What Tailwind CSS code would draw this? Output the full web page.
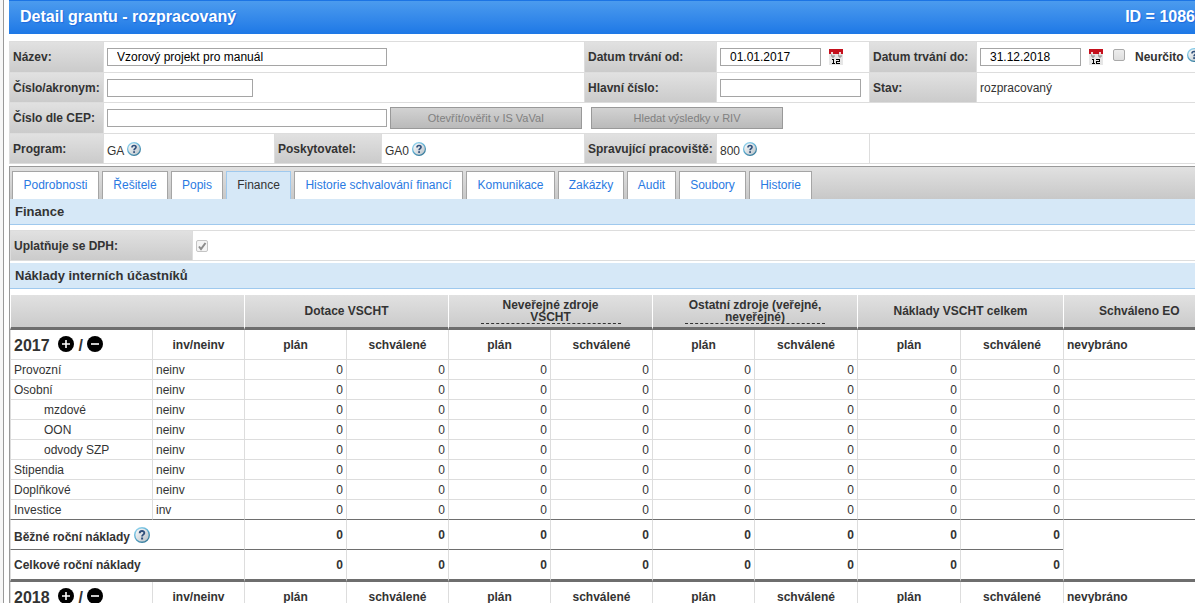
<!DOCTYPE html>
<html lang="cs">
<head>
<meta charset="utf-8">
<title>Detail grantu</title>
<script src="https://cdn.jsdelivr.net/npm/@tailwindcss/browser@4"></script>
</head>
<body class="overflow-hidden bg-[#f7f7f7] font-['Liberation_Sans',Arial,sans-serif] text-xs text-[#333]">
<svg class="absolute size-0" aria-hidden="true">
  <defs>
    <linearGradient id="ring" x1="0" y1="0" x2="0.6" y2="1"><stop offset="0" stop-color="#9fdcf3"/><stop offset="0.5" stop-color="#5fb0d4"/><stop offset="1" stop-color="#3a7f9f"/></linearGradient>
    <linearGradient id="face" x1="0" y1="0" x2="1" y2="1"><stop offset="0" stop-color="#ffffff"/><stop offset="1" stop-color="#b5bfc6"/></linearGradient>
  </defs>
  <symbol id="help" viewBox="0 0 16 16">
    <circle cx="8" cy="8" r="7.3" fill="url(#face)" stroke="url(#ring)" stroke-width="1.4"/>
    <path d="M5.7 6.3C5.8 3.3 10.4 3.4 10.3 6C10.3 7.6 8.1 7.7 8.1 9.5" fill="none" stroke="#2f4f7c" stroke-width="1.9"/>
    <rect x="7.1" y="10.5" width="2" height="2" fill="#2f4f7c"/>
  </symbol>
  <symbol id="calendar" viewBox="0 0 14 16">
    <rect width="14" height="16" fill="#e6e6e6"/>
    <rect width="14" height="5" fill="#c4101c"/>
    <path d="M2 3h2v2h-2zM10 3h2v2h-2z" fill="#f4d5d5"/>
    <path d="M2 6h1v2h2v-2M9 6h1v2h2v-2" fill="none" stroke="#888" stroke-width="1"/>
    <path d="M3 10h2v4h1v1H3v-1h1v-3H3zM7 10h4v3H8v1h3v1H7v-3h3v-1H7z" fill="#000"/>
  </symbol>
  <symbol id="plus" viewBox="0 0 16 16"><circle cx="8" cy="8" r="8" fill="#000"/><path d="M4 8h8M8 4v8" stroke="#fff" stroke-width="1.600"/></symbol>
  <symbol id="minus" viewBox="0 0 16 16"><circle cx="8" cy="8" r="8" fill="#000"/><path d="M4 8h8" stroke="#fff" stroke-width="1.600"/></symbol>
</svg>

<div class="ml-[3px] border-l border-[#999] bg-white pl-[5px]">
  <header class="flex h-[34px] items-center justify-between border-t border-[#1c74e4] bg-linear-to-b from-[#4b9bee] to-[#1d78e6] pb-[2px] pl-[11px] text-base font-bold text-white [text-shadow:1px_1px_1px_#1a6ae0]">
    <h1>Detail grantu - rozpracovaný</h1>
    <span>ID = 1086</span>
  </header>

  <form class="mt-[7px] border-t border-l border-[#ddd] [&_label]:font-bold">
    <div class="flex h-[31px] border-b border-[#ddd]">
      <div class="flex w-[94px] shrink-0 items-center border-r border-[#ddd] bg-linear-to-b from-[#e1e1e1] to-[#cbcbcb] pl-[3px]"><label for="nazev">Název:</label></div>
      <div class="flex w-[481px] shrink-0 items-center border-r border-[#ddd] pl-[3px]"><input id="nazev" value="Vzorový projekt pro manuál" class="h-[18px] w-[280px] border border-[#a5a5a5] pl-[9px] text-black"></div>
      <div class="flex w-[132px] shrink-0 items-center border-r border-[#ddd] bg-linear-to-b from-[#e1e1e1] to-[#cbcbcb] pl-[3px]"><label for="od">Datum trvání od:</label></div>
      <div class="flex w-[153px] shrink-0 items-center border-r border-[#ddd] pl-[3px]"><input id="od" value="01.01.2017" class="h-[18px] w-[101px] border border-[#a5a5a5] pl-[9px] text-black"><button type="button" aria-label="Kalendář" class="ml-2"><svg class="h-4 w-[14px]"><use href="#calendar"/></svg></button></div>
      <div class="flex w-[107px] shrink-0 items-center border-r border-[#ddd] bg-linear-to-b from-[#e1e1e1] to-[#cbcbcb] pl-[3px]"><label for="do">Datum trvání do:</label></div>
      <div class="flex flex-1 items-center pl-[3px] whitespace-nowrap"><input id="do" value="31.12.2018" class="h-[18px] w-[101px] shrink-0 border border-[#a5a5a5] pl-[9px] text-black"><button type="button" aria-label="Kalendář" class="ml-2 shrink-0"><svg class="h-4 w-[14px]"><use href="#calendar"/></svg></button><input type="checkbox" id="neurcito" class="mb-1 ml-[10px] size-3 shrink-0 appearance-none rounded-xs border border-[#a9a9a9] bg-linear-to-b from-[#ededed] to-[#dedede]"><label for="neurcito" class="ml-[10px]">Neurčito</label><svg class="mb-1 ml-[3px] size-[14px] shrink-0"><use href="#help"/></svg></div>
    </div>
    <div class="flex h-[30px] border-b border-[#ddd]">
      <div class="flex w-[94px] shrink-0 items-center border-r border-[#ddd] bg-linear-to-b from-[#e1e1e1] to-[#cbcbcb] pl-[3px]"><label for="akronym">Číslo/akronym:</label></div>
      <div class="flex w-[481px] shrink-0 items-center border-r border-[#ddd] pl-[3px]"><input id="akronym" class="h-[18px] w-[146px] border border-[#a5a5a5] pl-[9px]"></div>
      <div class="flex w-[132px] shrink-0 items-center border-r border-[#ddd] bg-linear-to-b from-[#e1e1e1] to-[#cbcbcb] pl-[3px]"><label for="hlavni">Hlavní číslo:</label></div>
      <div class="flex w-[153px] shrink-0 items-center border-r border-[#ddd] pl-[3px]"><input id="hlavni" class="h-[18px] w-[141px] border border-[#a5a5a5] pl-[9px]"></div>
      <div class="flex w-[107px] shrink-0 items-center border-r border-[#ddd] bg-linear-to-b from-[#e1e1e1] to-[#cbcbcb] pl-[3px] font-bold">Stav:</div>
      <div class="flex flex-1 items-center pl-[3px]">rozpracovaný</div>
    </div>
    <div class="flex h-[31px] border-b border-[#ddd]">
      <div class="flex w-[94px] shrink-0 items-center border-r border-[#ddd] bg-linear-to-b from-[#e1e1e1] to-[#cbcbcb] pl-[3px]"><label for="cep">Číslo dle CEP:</label></div>
      <div class="flex flex-1 items-center pl-[3px]"><input id="cep" class="h-[18px] w-[280px] border border-[#a5a5a5] pl-[9px]"><button type="button" disabled class="ml-[3px] h-[22px] w-48 border border-[#999] bg-linear-to-b from-[#d2d2d2] to-[#bababa] text-[11px] text-[#808080]">Otevřít/ověřit v IS VaVaI</button><button type="button" disabled class="ml-[9px] h-[22px] w-48 border border-[#999] bg-linear-to-b from-[#d2d2d2] to-[#bababa] text-[11px] text-[#808080]">Hledat výsledky v RIV</button></div>
    </div>
    <div class="flex h-[30px] border-b border-[#ddd]">
      <div class="flex w-[94px] shrink-0 items-center border-r border-[#ddd] bg-linear-to-b from-[#e1e1e1] to-[#cbcbcb] pl-[3px] font-bold">Program:</div>
      <div class="flex w-[171px] shrink-0 items-center gap-[3px] border-r border-[#ddd] pl-[3px]"><span class="mt-1">GA</span><svg class="size-[14px]"><use href="#help"/></svg></div>
      <div class="flex w-[107px] shrink-0 items-center border-r border-[#ddd] bg-linear-to-b from-[#e1e1e1] to-[#cbcbcb] pl-[3px] font-bold">Poskytovatel:</div>
      <div class="flex w-[203px] shrink-0 items-center gap-[3px] border-r border-[#ddd] pl-[3px]"><span class="mt-1">GA0</span><svg class="size-[14px]"><use href="#help"/></svg></div>
      <div class="flex w-[132px] shrink-0 items-center border-r border-[#ddd] bg-linear-to-b from-[#e1e1e1] to-[#cbcbcb] pl-[3px] font-bold whitespace-nowrap">Spravující pracoviště:</div>
      <div class="flex w-[153px] shrink-0 items-center gap-[3px] border-r border-[#ddd] pl-[3px]"><span class="mt-1">800</span><svg class="size-[14px]"><use href="#help"/></svg></div>
    </div>
  </form>

  <main class="mt-[2px] border-t border-l border-[#999]">
    <nav class="flex h-8 items-end gap-[3px] bg-linear-to-b from-[#e1e1e1] to-[#c8c8c8] pl-[2px] [&_a]:flex [&_a]:h-7 [&_a]:items-center [&_a]:justify-center [&_a]:border [&_a]:border-b-0 [&_a]:pb-px [&_a]:whitespace-nowrap">
      <a href="#" class="w-[87px] border-[#a5a5a5] bg-white text-[#2a7ae2]">Podrobnosti</a>
      <a href="#" class="w-[66px] border-[#a5a5a5] bg-white text-[#2a7ae2]">Řešitelé</a>
      <a href="#" class="w-[52px] border-[#a5a5a5] bg-white text-[#2a7ae2]">Popis</a>
      <a href="#" aria-current="page" class="w-[65px] border-[#9fc9ee] bg-[#d6e8f7]">Finance</a>
      <a href="#" class="w-[169px] border-[#a5a5a5] bg-white text-[#2a7ae2]">Historie schvalování financí</a>
      <a href="#" class="w-[89px] border-[#a5a5a5] bg-white text-[#2a7ae2]">Komunikace</a>
      <a href="#" class="w-[66px] border-[#a5a5a5] bg-white text-[#2a7ae2]">Zakázky</a>
      <a href="#" class="w-[49px] border-[#a5a5a5] bg-white text-[#2a7ae2]">Audit</a>
      <a href="#" class="w-[67px] border-[#a5a5a5] bg-white text-[#2a7ae2]">Soubory</a>
      <a href="#" class="w-[63px] border-[#a5a5a5] bg-white text-[#2a7ae2]">Historie</a>
    </nav>
    <h2 class="flex h-[26px] items-center border-b border-[#9fc9ee] bg-[#d6e8f7] pl-[5px] text-[13px] font-bold">Finance</h2>
    <div class="mt-[5px] flex h-[31px] border-y border-[#ddd]">
      <div class="flex w-[183px] items-center border-r border-l border-[#ddd] bg-linear-to-b from-[#e1e1e1] to-[#cbcbcb] pl-[3px]"><label for="dph" class="font-bold">Uplatňuje se DPH:</label></div>
      <div class="grid place-items-center pl-[3px]">
        <input id="dph" type="checkbox" checked disabled class="col-start-1 row-start-1 size-3 appearance-none rounded-xs border border-[#c4c4c4] bg-[#f4f4f4]">
        <svg class="pointer-events-none col-start-1 row-start-1 size-3" viewBox="0 0 12 12"><path d="M3 6.500l2 2.500L9.500 3" fill="none" stroke="#8c8c8c" stroke-width="2"/></svg>
      </div>
    </div>
    <h2 class="mt-[2px] flex h-[26px] items-center border-b border-[#9fc9ee] bg-[#d6e8f7] pl-[5px] text-[13px] font-bold">Náklady interních účastníků</h2>

    <table class="mt-[6px] w-full table-fixed border-separate border-spacing-0 leading-4 [&_td]:border-b [&_td]:border-l [&_td]:border-[#ddd] [&_td]:px-[3px] [&_td]:py-0 [&_th]:p-0">
      <colgroup><col class="w-[142px]"><col class="w-[92px]"><col class="w-[102px]"><col class="w-[102px]"><col class="w-[102px]"><col class="w-[102px]"><col class="w-[102px]"><col class="w-[103px]"><col class="w-[103px]"><col class="w-[103px]"><col></colgroup>
      <thead>
        <tr class="h-[35px] [&_th]:border-b-3 [&_th]:border-b-[#6e6e6e] [&_th]:border-l [&_th]:border-l-white [&_th]:bg-linear-to-b [&_th]:from-[#e1e1e1] [&_th]:to-[#cbcbcb]">
          <th colspan="2"></th>
          <th colspan="2">Dotace VSCHT</th>
          <th colspan="2" class="leading-3"><div class="mx-auto w-[140px] border-b border-dashed border-[#333] px-3">Neveřejné zdroje VSCHT</div></th>
          <th colspan="2" class="leading-3"><div class="mx-auto w-[140px] border-b border-dashed border-[#333]">Ostatní zdroje (veřejné, neveřejné)</div></th>
          <th colspan="2">Náklady VSCHT celkem</th>
          <th><div class="pl-[35px] text-left">Schváleno EO</div></th>
        </tr>
      </thead>
      <tbody class="[&_td]:text-right [&_td:nth-child(-n+2)]:text-left">
        <tr class="h-[30px] [&_th]:border-b [&_th]:border-l [&_th]:border-[#ddd]">
          <th><div class="flex items-center pt-[3px] pl-[3px] text-base leading-4">2017<button type="button" aria-label="Přidat" class="mb-1 ml-2"><svg class="size-4"><use href="#plus"/></svg></button><span class="mr-1 ml-[5px]">/</span><button type="button" aria-label="Odebrat" class="mb-1"><svg class="size-4"><use href="#minus"/></svg></button></div></th>
          <th>inv/neinv</th><th>plán</th><th>schválené</th><th>plán</th><th>schválené</th><th>plán</th><th>schválené</th><th>plán</th><th>schválené</th><th><div class="pl-[3px] text-left">nevybráno</div></th>
        </tr>
        <tr class="h-5"><td>Provozní</td><td>neinv</td><td>0</td><td>0</td><td>0</td><td>0</td><td>0</td><td>0</td><td>0</td><td>0</td><td></td></tr>
        <tr class="h-5"><td>Osobní</td><td>neinv</td><td>0</td><td>0</td><td>0</td><td>0</td><td>0</td><td>0</td><td>0</td><td>0</td><td></td></tr>
        <tr class="h-5"><td><span class="pl-[30px]">mzdové</span></td><td>neinv</td><td>0</td><td>0</td><td>0</td><td>0</td><td>0</td><td>0</td><td>0</td><td>0</td><td></td></tr>
        <tr class="h-5"><td><span class="pl-[30px]">OON</span></td><td>neinv</td><td>0</td><td>0</td><td>0</td><td>0</td><td>0</td><td>0</td><td>0</td><td>0</td><td></td></tr>
        <tr class="h-5"><td><span class="pl-[30px]">odvody SZP</span></td><td>neinv</td><td>0</td><td>0</td><td>0</td><td>0</td><td>0</td><td>0</td><td>0</td><td>0</td><td></td></tr>
        <tr class="h-5"><td>Stipendia</td><td>neinv</td><td>0</td><td>0</td><td>0</td><td>0</td><td>0</td><td>0</td><td>0</td><td>0</td><td></td></tr>
        <tr class="h-5"><td>Doplňkové</td><td>neinv</td><td>0</td><td>0</td><td>0</td><td>0</td><td>0</td><td>0</td><td>0</td><td>0</td><td></td></tr>
        <tr class="h-5 [&_td]:border-b-[#6e6e6e]"><td>Investice</td><td>inv</td><td>0</td><td>0</td><td>0</td><td>0</td><td>0</td><td>0</td><td>0</td><td>0</td><td></td></tr>
      </tbody>
      <tbody class="font-bold [&_td]:text-right">
        <tr class="h-[30px] [&_td]:border-b-[#6e6e6e]"><td colspan="2"><div class="flex items-center gap-1"><span class="pt-1">Běžné roční náklady</span><svg class="size-4"><use href="#help"/></svg></div></td><td>0</td><td>0</td><td>0</td><td>0</td><td>0</td><td>0</td><td>0</td><td>0</td><td rowspan="2" class="border-b-3!"></td></tr>
        <tr class="h-8 [&_td]:border-b-3 [&_td]:border-b-[#6e6e6e]"><td colspan="2"><div class="text-left">Celkové roční náklady</div></td><td>0</td><td>0</td><td>0</td><td>0</td><td>0</td><td>0</td><td>0</td><td>0</td></tr>
        <tr class="h-[30px] [&_th]:border-b [&_th]:border-l [&_th]:border-[#ddd]">
          <th><div class="flex items-center pt-[3px] pl-[3px] text-base leading-4">2018<button type="button" aria-label="Přidat" class="mb-1 ml-2"><svg class="size-4"><use href="#plus"/></svg></button><span class="mr-1 ml-[5px]">/</span><button type="button" aria-label="Odebrat" class="mb-1"><svg class="size-4"><use href="#minus"/></svg></button></div></th>
          <th>inv/neinv</th><th>plán</th><th>schválené</th><th>plán</th><th>schválené</th><th>plán</th><th>schválené</th><th>plán</th><th>schválené</th><th><div class="pl-[3px] text-left">nevybráno</div></th>
        </tr>
      </tbody>
    </table>
  </main>
</div>
</body>
</html>
